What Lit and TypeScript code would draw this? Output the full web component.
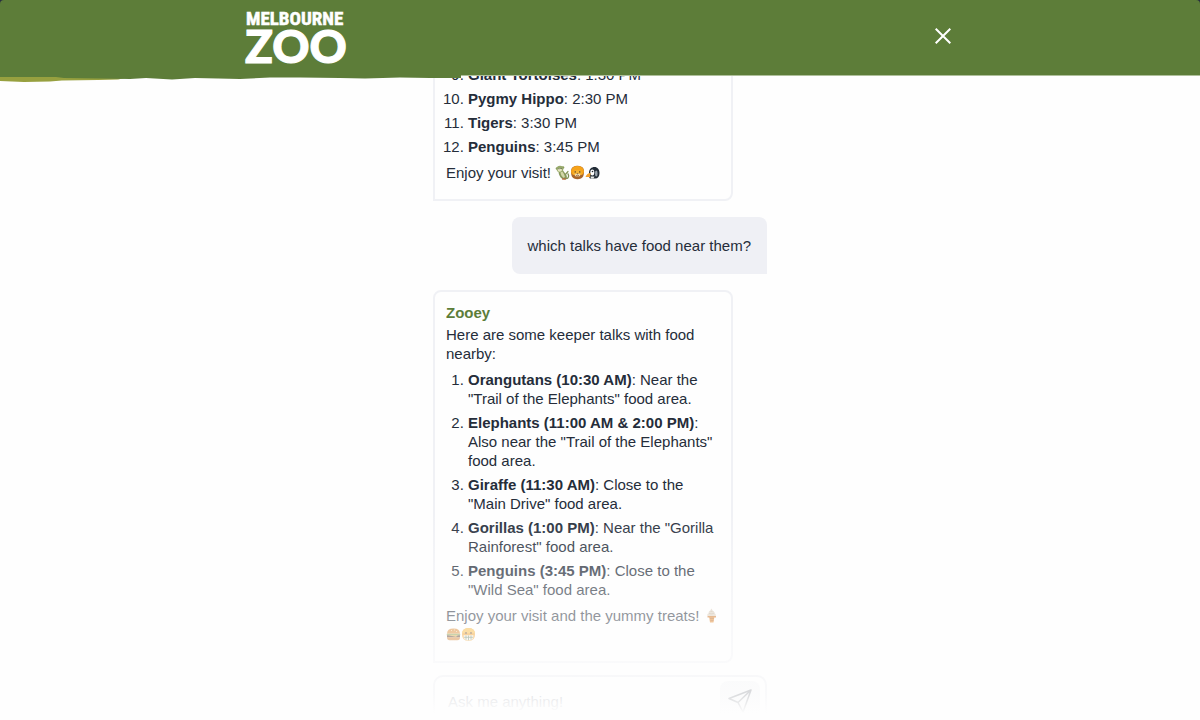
import { LitElement, html, css, svg } from "lit";
import { customElement, state } from "lit/decorators.js";

interface Talk {
  name: string;
  detail: string;
}

const schedule: Talk[] = [
  { name: "Giant Tortoises", detail: "1:30 PM" },
  { name: "Pygmy Hippo", detail: "2:30 PM" },
  { name: "Tigers", detail: "3:30 PM" },
  { name: "Penguins", detail: "3:45 PM" },
];

const foodTalks: Talk[] = [
  { name: "Orangutans (10:30 AM)", detail: 'Near the "Trail of the Elephants" food area.' },
  { name: "Elephants (11:00 AM & 2:00 PM)", detail: 'Also near the "Trail of the Elephants" food area.' },
  { name: "Giraffe (11:30 AM)", detail: 'Close to the "Main Drive" food area.' },
  { name: "Gorillas (1:00 PM)", detail: 'Near the "Gorilla Rainforest" food area.' },
  { name: "Penguins (3:45 PM)", detail: 'Close to the "Wild Sea" food area.' },
];

const glyphs = {
  monkey: svg`
    <path d="M11 13.5c3 0 3-3 2-4.600" fill="none" stroke="#7d8f55" stroke-width="1.300" stroke-linecap="round"/>
    <path d="M3.500 6c0 4 2 8 6 8.500 2.500 0 3-3 1.500-5L8 5.500z" fill="#87985c"/>
    <path d="M5.500 7c0 3 1.500 5 3.500 6l1-2-2.500-4.500z" fill="#d3d7a8"/>
    <path d="M10 10l3-3.500" stroke="#87985c" stroke-width="1.200" stroke-linecap="round"/>
    <circle cx="2" cy="3.500" r="1.300" fill="#8a9c5c"/><circle cx="8" cy="2.500" r="1.300" fill="#8a9c5c"/>
    <circle cx="5" cy="4" r="3.300" fill="#97a96b"/><ellipse cx="4.800" cy="5" rx="2.200" ry="1.800" fill="#e4e6c0"/>
    <circle cx="4" cy="3.800" r=".5" fill="#333"/><circle cx="6" cy="3.600" r=".5" fill="#333"/>
    <path d="M7 14h4" stroke="#b8653a" stroke-width="1.200"/>`,
  lion: svg`
    <path d="M1 7q0-4 2-5 4-2.500 9 0 2 1 2 5 0 5-3 6.500-3.500 1.500-7 0Q1 12 1 7z" fill="#a8652a"/>
    <path d="M1 6.500Q1.500 1 7.500 1t6.500 5.500q0 2.500-2.500 3.500h-8Q1 9 1 6.500z" fill="#f6a31a"/>
    <ellipse cx="7.500" cy="8" rx="4.200" ry="2.800" fill="#f5b437"/>
    <ellipse cx="7.500" cy="10" rx="2.800" ry="1.500" fill="#f3ddb0"/>
    <path d="M6.500 8.500h2l-1 1z" fill="#4d2b18"/>
    <circle cx="5.200" cy="6.900" r=".7" fill="#3b2415"/><circle cx="9.800" cy="6.900" r=".7" fill="#3b2415"/>
    <path d="M6 10.300q1.500 1 3 0" fill="none" stroke="#6b3a1c" stroke-width=".6"/>`,
  penguin: svg`
    <path d="M4 8c0-4 2.500-6 5.500-6s5 2.500 5 6-1.500 5.500-4.500 5.500H5c-1.500-1.500-1-3.500-1-5.500z" fill="#222c36"/>
    <ellipse cx="7.300" cy="7.600" rx="2" ry="3" fill="#fff"/>
    <ellipse cx="11.300" cy="8.500" rx="1.300" ry="3" fill="#9aa4ad"/>
    <circle cx="7.500" cy="6.500" r=".8" fill="#1b242d"/>
    <path d="M.5 12Q2 8 5.500 8L5 12z" fill="#f6a12b"/>
    <path d="M5.500 11.500h4l-1 2H6z" fill="#e8e9e6"/>`,
  cone: svg`
    <path d="M5 8h5.500l-1 6.500H6z" fill="#e0862a"/><path d="M6 10.500h4M6.500 12.500h3" stroke="#a95a1c" stroke-width=".6"/>
    <path d="M3.500 7.800h8.500v1.700H3.500z" fill="#cf7524"/>
    <path d="M3.500 8q-1-2 1-2.800Q4.500 3 6.500 2.600q0-1.300 1-2.100 1 1.500.8 2.100 2.200.4 2.200 2.600 2 .8 1 2.800z" fill="#dccfbd"/>
    <path d="M5 5.500q3 1 5.500-.5M6.500 3.300h2" stroke="#b5a38c" stroke-width=".6" fill="none"/>`,
  burger: svg`
    <path d="M1 6.800Q1 1.500 7.500 1.500T14 6.800z" fill="#d98427"/>
    <path d="M.8 6.800h13.400v1.500H.8z" fill="#7f9a3f"/><path d="M1 8.200h13v2.200H1z" fill="#4a2d1c"/>
    <path d="M2 8.200h10l-2 1.500z" fill="#f4c440"/>
    <path d="M1 10.300h13q0 3-2.500 3h-8q-2.500 0-2.500-3z" fill="#d07822"/>
    <path d="M5 3.500h1M8 3h1M10 4.500h1" stroke="#f8ddb0" stroke-width=".8"/>`,
  face: svg`
    <path d="M1 7q0-6 6.500-6T14 7q0 7-6.500 7T1 7z" fill="#f09a1c"/>
    <path d="M1 6Q2 1 7.500 1T14 6z" fill="#f7b433"/>
    <circle cx="5" cy="6" r=".9" fill="#5a3a20"/><circle cx="10" cy="6" r=".9" fill="#5a3a20"/>
    <path d="M2.500 8.300h10q0 5.200-5 5.200t-5-5.200z" fill="#f4f1e8"/>
    <path d="M3 10.300h9M5 8.500v4.300M7.500 8.500v4.700M10 8.500v4.300" stroke="#57724f" stroke-width=".8"/>`,
};

@customElement("zoo-glyph")
export class ZooGlyph extends LitElement {
  static properties = { name: { type: String } };
  declare name: keyof typeof glyphs;

  static styles = css`
    :host { display: inline-block; width: 15px; height: 15px; vertical-align: -2px; }
    .glyph { display: block; width: 100%; height: 100%; }
  `;

  render() {
    return html`<svg class="glyph" viewBox="0 0 15 15" aria-hidden="true">${glyphs[this.name]}</svg>`;
  }
}

@customElement("app-root")
export class AppRoot extends LitElement {
  @state() private draft = "";

  static styles = css`
    :host {
      display: flex;
      flex-direction: column;
      position: relative;
      height: 100vh;
      overflow: hidden;
      background: #fefefe;
      color: #252d3a;
      font-family: "Liberation Sans", Arial, sans-serif;
      font-size: 15px;
      line-height: 19px;
    }
    * { box-sizing: border-box; }
    .banner { flex: none; position: relative; z-index: 1; background: #272c40; }
    .bar {
      background: #5d7d39;
      border-bottom: 1px solid #afc09b;
      border-radius: 4px 4px 0 0;
    }
    .bar-inner {
      display: flex;
      justify-content: space-between;
      align-items: flex-start;
      width: 60%;
      min-width: 334px;
      height: 75px;
      margin: 0 auto;
      padding: 10px 5px 0;
    }
    .torn { position: absolute; top: 75px; left: 0; width: 461px; height: 7px; }
    .logo {
      display: grid;
      color: #fff;
      text-decoration: none;
      justify-items: start;
    }
    .logo-city {
      font: 700 19px/18px "Liberation Sans Narrow", "Roboto Condensed", Roboto, sans-serif;
      padding-left: 1px;
      -webkit-text-stroke: 0.5px #fff;
    }
    .logo-zoo { font: 900 46px/36px Lato, sans-serif; -webkit-text-stroke: 1px #fff; }
    .close {
      display: grid;
      place-items: center;
      width: 24px;
      height: 24px;
      margin-top: 14px;
      padding: 0;
      border: 0;
      background: none;
    }
    .icon { display: block; }
    .chat {
      flex: 1;
      min-height: 0;
      display: flex;
      flex-direction: column;
      justify-content: flex-end;
      gap: 16px;
      width: 334px;
      max-width: 100%;
      margin: 0 auto;
      overflow: hidden;
    }
    .card {
      flex: none;
      align-self: flex-start;
      width: 300px;
      padding: 11px 11px 17px;
      border: 2px solid #f0f1f5;
      border-radius: 8px 8px 8px 0;
    }
    .question {
      flex: none;
      display: flex;
      align-items: center;
      align-self: flex-end;
      min-height: 57px;
      padding: 0 16px;
      border-radius: 8px 8px 0 8px;
      background: #eff0f5;
    }
    .author { margin: 0 0 3px; font-size: 15px; color: #5d7d39; }
    .text { margin: 0; }
    .talks { display: grid; gap: 5px; margin: 7px 0; padding-left: 22px; }
    .composer {
      flex: none;
      display: flex;
      align-items: center;
      width: 334px;
      max-width: 100%;
      height: 52px;
      margin: 12px auto -7px;
      padding: 0 5px 0 13px;
      border: 2px solid #e6e7ed;
      border-radius: 10px;
    }
    .field {
      flex: 1;
      min-width: 0;
      padding: 0;
      border: 0;
      outline: 0;
      background: none;
      color: inherit;
      font: inherit;
    }
    .field::placeholder { color: #7d8390; opacity: 1; }
    .send {
      display: grid;
      place-items: center;
      width: 40px;
      height: 40px;
      padding: 0;
      border: 0;
      border-radius: 8px;
      background: #eff0f3;
      color: #454b57;
    }
    .fade {
      position: absolute;
      inset: auto 0 0;
      height: 210px;
      pointer-events: none;
      background: linear-gradient(
        rgba(254, 254, 254, 0),
        rgba(254, 254, 254, 0.3) 29%,
        rgba(254, 254, 254, 0.5) 50%,
        rgba(254, 254, 254, 0.81) 88%,
        #fefefe 97%
      );
    }
  `;

  private talks(items: Talk[], start = 1) {
    return html`<ol class="talks" start=${start}>
      ${items.map((t) => html`<li><strong>${t.name}</strong>: ${t.detail}</li>`)}
    </ol>`;
  }

  private onInput(e: Event) {
    this.draft = (e.target as HTMLInputElement).value;
  }

  render() {
    return html`
      <header class="banner">
        <div class="bar">
          <div class="bar-inner">
            <a class="logo" href="#" aria-label="Melbourne Zoo">
              <span class="logo-city">MELBOURNE</span>
              <span class="logo-zoo">ZOO</span>
            </a>
            <button class="close" type="button" aria-label="Close">
              <svg class="icon" width="16" height="16" viewBox="0 0 16 16" fill="none" stroke="#fff" stroke-width="2">
                <path d="M.7.7l14.600 14.600M15.300.7L.7 15.300" />
              </svg>
            </button>
          </div>
        </div>
        <svg class="torn" viewBox="0 0 461 7" aria-hidden="true">
          <path d="M0 1H135L118 4.500 98 5 62 5.500 50 6.500 24 7 0 6z" fill="#97a03f" />
          <path d="M0 0H461V3H430L400 2.500 365 3.500 340 3 300 2.500 270 2.500 240 4 218 3.500 195 3 172 4.500 146 3 130 4 100 3.500 64 3 56 2 0 2z" fill="#5d7d39" />
        </svg>
      </header>

      <main class="chat">
        <article class="card">
          ${this.talks(schedule, 9)}
          <p class="text">
            Enjoy your visit! <zoo-glyph name="monkey"></zoo-glyph><zoo-glyph name="lion"></zoo-glyph><zoo-glyph name="penguin"></zoo-glyph>
          </p>
        </article>
        <article class="question">which talks have food near them?</article>
        <article class="card">
          <h2 class="author">Zooey</h2>
          <p class="text">Here are some keeper talks with food nearby:</p>
          ${this.talks(foodTalks)}
          <p class="text">
            Enjoy your visit and the yummy treats! <zoo-glyph name="cone"></zoo-glyph><wbr /><zoo-glyph name="burger"></zoo-glyph><zoo-glyph name="face"></zoo-glyph>
          </p>
        </article>
      </main>

      <form class="composer" @submit=${(e: Event) => e.preventDefault()}>
        <input class="field" type="text" aria-label="Message" placeholder="Ask me anything!" .value=${this.draft} @input=${this.onInput} />
        <button class="send" type="submit" aria-label="Send">
          <svg class="icon" width="26" height="26" viewBox="0 0 26 26" fill="none" stroke="currentColor" stroke-width="1.500" stroke-linejoin="round">
            <path d="M24 2L2 10.500 11 14.500 16 24zM24 2L11 14.500" />
          </svg>
        </button>
      </form>
      <div class="fade"></div>
    `;
  }
}
